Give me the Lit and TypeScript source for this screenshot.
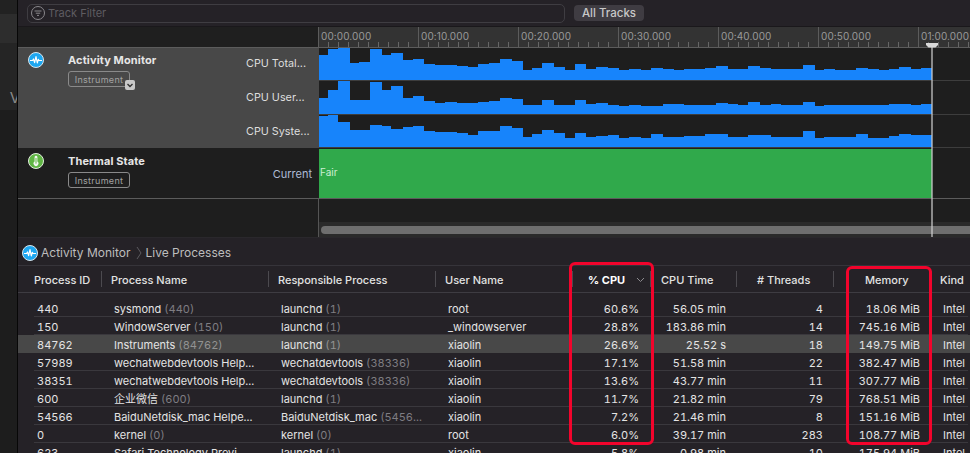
import { LitElement, html, css, svg } from "lit";
import { customElement } from "lit/decorators.js";

const EDGES = [319,328,338,350,359,370,382,391,403,413,424,435,445,457,468,478,489,500,512,523,532,542,554,565,575,586,596,608,619,629,641,651,663,674,684,694,705,716,728,738,748,760,771,781,792,803,815,824,835,845,856,868,879,889,899,911,921,932];
const ROW1 = [25,31,32,17,18,31,25,27,20,21,16,15,15,14,13,16,17,21,19,10,12,17,13,10,16,11,13,12,10,11,10,12,11,10,11,11,12,14,11,11,14,12,11,11,11,15,10,11,10,10,12,11,10,11,13,11,12];
const ROW2 = [16,24,33,14,14,32,24,28,16,18,13,11,12,11,11,12,13,16,15,9,9,14,9,9,14,10,11,9,8,9,8,8,10,10,9,9,9,11,10,9,12,9,10,9,9,12,8,9,9,9,9,9,9,10,10,9,10];
const ROW3 = [31,32,25,17,17,22,21,18,20,21,16,15,15,14,12,16,16,21,19,10,13,17,14,9,14,10,11,12,9,10,9,13,10,10,11,11,13,13,10,10,12,12,10,10,10,16,9,10,10,10,13,9,9,11,13,12,12];

const barPath = (hs: number[], h: number) => {
  let d = `M0 ${h}`;
  hs.forEach((v, i) => {
    d += `V${h - v}H${EDGES[i + 1] - 319}`;
  });
  return d + `V${h}Z`;
};

const RULER = ["00:00.000","00:10.000","00:20.000","00:30.000","00:40.000","00:50.000","01:00.000"];

type Row = [string, string, string, string, string, string, string, string, string, string, string];
const ROWS: Row[] = [
  ["440","sysmond","(440)","launchd","(1)","root","60.6%","56.05 min","4","18.06 MiB",""],
  ["150","WindowServer","(150)","launchd","(1)","_windowserver","28.8%","183.86 min","14","745.16 MiB",""],
  ["84762","Instruments","(84762)","launchd","(1)","xiaolin","26.6%","25.52 s","18","149.75 MiB","sel"],
  ["57989","wechatwebdevtools Help...","","wechatdevtools","(38336)","xiaolin","17.1%","51.58 min","22","382.47 MiB",""],
  ["38351","wechatwebdevtools Help...","","wechatdevtools","(38336)","xiaolin","13.6%","43.77 min","11","307.77 MiB",""],
  ["600","企业微信","(600)","launchd","(1)","xiaolin","11.7%","21.82 min","79","768.51 MiB",""],
  ["54566","BaiduNetdisk_mac Helpe...","","BaiduNetdisk_mac","(5456...","xiaolin","7.2%","21.46 min","8","151.16 MiB",""],
  ["0","kernel","(0)","kernel","(0)","root","6.0%","39.17 min","283","108.77 MiB",""],
  ["623","Safari Technology Previ...","","launchd","(1)","xiaolin","5.8%","0.98 min","10","175.94 MiB",""],
];

const pulse = (size: number) => html`<svg class="ico" width=${size} height=${size} viewBox="0 0 16 16">
  <circle cx="8" cy="8" r="7.5" fill="#1ea7f0" stroke="#d8e6ee" stroke-width="1"/>
  <path d="M2 8.5H4.6L5.5 7L6.6 10.6L8 4.6L9.3 11L10.3 7.4L11 8.5H14" fill="none" stroke="#fff" stroke-width="1.2" stroke-linejoin="round"/>
</svg>`;

const thermo = html`<svg class="ico" width="16" height="16" viewBox="0 0 16 16">
  <circle cx="8" cy="8" r="7.5" fill="#5fb544" stroke="#e3eede" stroke-width="1"/>
  <path d="M6.6 4.2a1.4 1.4 0 0 1 2.8 0V8.6a2.4 2.4 0 1 1-2.8 0Z" fill="#f2f7ef"/>
  <path d="M8 5V10.6" stroke="#5fb544" stroke-width="1"/>
</svg>`;

@customElement("app-root")
export class AppRoot extends LitElement {
  static styles = css`
    :host {
      display: block;
      width: 970px;
      height: 453px;
      overflow: hidden;
      font-family: Inter, "Noto Sans CJK SC", sans-serif;
      font-size: 11px;
      color: #e4e4e4;
      background: #252227;
    }
    .app { position: relative; display: flex; width: 970px; height: 453px; overflow: hidden; }

    .strip { width: 17px; flex: none; border-right: 1px solid #070707; display: flex; flex-direction: column; }
    .s1 { height: 14px; background: #222; }
    .s2 { height: 29px; background: #2d2d2d; }
    .s3 { height: 67px; background: #252525; overflow: hidden; display: flex; align-items: flex-end; justify-content: flex-end; }
    .s3 span { font-size: 15px; color: #8a8a8a; margin-right: -3px; margin-bottom: 4px; line-height: 16px; }
    .s4 { flex: 1; background: #1d1d1d; }

    .main { flex: 1; min-width: 0; display: flex; flex-direction: column; }

    .filterbar { height: 26px; flex: none; display: flex; align-items: center; gap: 9px; padding-left: 9px; border-bottom: 1px solid #1a181b; }
    .field { width: 538px; height: 19px; box-sizing: border-box; border: 1px solid #3f3d42; border-radius: 5px; display: flex; align-items: center; gap: 2px; padding-left: 2px; color: #5e5c61; font-size: 11px; }
    .allbtn { width: 70px; height: 16px; background: #3f3c42; border-radius: 4px; color: #c8c8c8; font-size: 11.5px; font-weight: 500; display: flex; align-items: center; justify-content: center; }

    .tlhead { height: 21px; flex: none; display: flex; box-sizing: border-box; border-bottom: 1px solid #5c5c5c; }
    .tlleft { width: 300px; flex: none; background: #1f1f1f; border-right: 1px solid #5c5c5c; }
    .ruler {
      flex: 1; display: flex; overflow: hidden; color: #9a9a9a; font-size: 10px; letter-spacing: .1px;
      background-color: #333;
      background-image:
        repeating-linear-gradient(to right, #5c5c5c 0 1px, transparent 1px 100px),
        repeating-linear-gradient(to right, #666 0 1px, transparent 1px 10px);
      background-size: 100% 100%, 100% 5px;
      background-position: -1px 0, -1px 100%;
      background-repeat: no-repeat;
    }
    .ruler span { width: 100px; flex: none; box-sizing: border-box; padding-left: 2px; line-height: 18px; }

    .track { display: flex; flex: none; background: #1e1e1e; }
    .tleft { width: 301px; flex: none; box-sizing: border-box; display: grid; grid-template-columns: 50px 178px 1fr; position: relative; }
    .sel { background: #484848; }
    .tr1 { height: 100px; }
    .tr2 { height: 51px; box-sizing: border-box; border-bottom: 1px solid #5c5c5c; }
    .tr2 .tleft { padding-top: 1px; }
    .tr3 { height: 38px; }
    .iconcell { padding: 4px 0 0 10px; }
    .ico { display: block; flex: none; }
    .title { font-weight: 700; font-size: 11px; letter-spacing: .12px; color: #e6e6e6; line-height: 16px; padding-top: 4px; }
    .badgewrap { position: relative; width: 62px; margin-top: 3px; }
    .badge { box-sizing: border-box; width: 62px; height: 16px; border: 1px solid #8a8a8a; border-radius: 3px; color: #a2a2a2; font-size: 9px; letter-spacing: .3px; display: flex; align-items: center; justify-content: center; }
    .corner { position: absolute; left: 57px; top: 9px; width: 10px; height: 10px; border-radius: 2px; background: #c9c9c9; }
    .corner svg { display: block; }
    .labels { margin-top: -1px; display: flex; flex-direction: column; }
    .labels div { height: 34px; line-height: 34px; color: #dedede; font-size: 10.8px; white-space: nowrap; }
    .current { display: flex; align-items: center; justify-content: flex-end; padding-right: 7px; color: #aebcd6; font-size: 11px; }

    .charts { flex: 1; display: flex; flex-direction: column; }
    .chart { display: block; border-bottom: 1px solid #3d3d3d; }
    .greenwrap { flex: 1; padding-top: 1px; }
    .green { width: 613px; height: 49px; background: #30a94b; color: #cdeed4; font-size: 10px; line-height: 47px; padding-left: 1px; box-sizing: border-box; }
    .blank { flex: 1; display: flex; flex-direction: column; justify-content: flex-end; border-left: 1px solid #555; margin-left: -1px; }
    .sbar { height: 15px; background: #2a2a2a; padding: 4px 0 3px 2px; box-sizing: border-box; }
    .thumb { height: 8px; background: #6e6e6e; border-radius: 4px 0 0 4px; }

    .crumb { height: 29px; flex: none; box-sizing: border-box; border-bottom: 1px solid #36343a; border-top: 1px solid #2a282c; padding-top: 2px; display: flex; align-items: center; padding-left: 4px; color: #bdbdbd; font-size: 12px; }
    .crumb .ico { margin-right: 3px; }
    .crumb .gt { margin: 0 3px 0 6px; }

    .cols { display: grid; grid-template-columns: 84px 167px 167px 137px 78px 86px 97px 98px 38px; }
    .thead { height: 27px; flex: none; box-sizing: border-box; border-bottom: 1px solid #3e3c42; align-items: center; color: #e2e2e2; }
    .th { position: relative; height: 16px; line-height: 18px; box-sizing: border-box; font-weight: 500; white-space: nowrap; }
    .th.div { border-right: 1px solid #4c4a4f; }
    .p1 { padding-left: 16px; } .p2 { padding-left: 9px; } .p5 { padding-left: 15px; font-weight: 700; color: #fff; }
    .p6 { padding-left: 10px; } .p7 { padding-left: 20px; } .p8 { padding-left: 31px; } .p9 { padding-left: 8px; }
    .sort { position: absolute; right: 5px; top: 6px; }

    .body { padding-top: 6px; font-variant-numeric: tabular-nums; }
    .row { padding-left: 16px; padding-right: 2px; }
    .row.on { background: #484848; }
    .inner { display: grid; grid-template-columns: 68px 167px 167px 137px 78px 86px 97px 98px 36px; height: 18px; box-sizing: border-box; border-bottom: 1px solid #3a383d; padding-top: 2px; line-height: 17px; white-space: nowrap; }
    .row.on .inner { border-bottom-color: transparent; }
    .c1 { padding-left: 3px; } .c2 { padding-left: 12px; } .c3 { padding-left: 12px; } .c4 { padding-left: 12px; }
    .r { text-align: right; }
    .c5 { padding-right: 12px; } .c6 { padding-right: 11px; } .c7 { padding-right: 11px; } .c8 { padding-right: 12px; }
    .c9 { padding-left: 11px; }
    .dim { color: #7f7d82; }
    .row.on .dim { color: #929292; }

    .playhead { position: absolute; left: 931px; top: 43px; width: 2px; height: 194px; background: rgba(205,205,205,.62); }
    .cap { position: absolute; left: -5px; top: 0; }
    .mark { position: absolute; box-sizing: border-box; border: 3px solid #f2042c; border-radius: 6px; }
    .m1 { left: 569px; top: 262px; width: 85px; height: 183px; }
    .m2 { left: 846px; top: 266px; width: 86px; height: 179px; }
  `;

  render() {
    return html`<div class="app">
      <div class="strip">
        <div class="s1"></div>
        <div class="s2"></div>
        <div class="s3"><span>V</span></div>
        <div class="s4"></div>
      </div>
      <div class="main">
        <div class="filterbar">
          <div class="field">
            <svg width="16" height="16" viewBox="0 0 16 16" fill="none" stroke="#8a888c">
              <circle cx="8" cy="8" r="6.5"/>
              <path d="M4.5 6H11.5M5.8 8.2H10.2M7 10.4H9"/>
            </svg>
            Track Filter
          </div>
          <div class="allbtn">All Tracks</div>
        </div>
        <div class="tlhead">
          <div class="tlleft"></div>
          <div class="ruler">${RULER.map((t) => html`<span>${t}</span>`)}</div>
        </div>

        <div class="track tr1">
          <div class="tleft sel">
            <div class="iconcell">${pulse(16)}</div>
            <div>
              <div class="title">Activity Monitor</div>
              <div class="badgewrap">
                <div class="badge">Instrument</div>
                <div class="corner">
                  <svg width="10" height="10" viewBox="0 0 10 10"><path d="M2.5 4L5 6.5L7.5 4" fill="none" stroke="#333" stroke-width="1.4"/></svg>
                </div>
              </div>
            </div>
            <div class="labels"><div>CPU Total...</div><div>CPU User...</div><div>CPU Syste...</div></div>
          </div>
          <div class="charts">
            <svg class="chart" width="651" height="32" viewBox="0 0 651 32">${svg`<path d=${barPath(ROW1, 32)} fill="#1784fb"/>`}</svg>
            <svg class="chart" width="651" height="33" viewBox="0 0 651 33">${svg`<path d=${barPath(ROW2, 33)} fill="#1784fb"/>`}</svg>
            <svg class="chart" width="651" height="32" viewBox="0 0 651 32">${svg`<path d=${barPath(ROW3, 32)} fill="#1784fb"/>`}</svg>
          </div>
        </div>

        <div class="track tr2">
          <div class="tleft">
            <div class="iconcell">${thermo}</div>
            <div>
              <div class="title">Thermal State</div>
              <div class="badgewrap"><div class="badge">Instrument</div></div>
            </div>
            <div class="current">Current</div>
          </div>
          <div class="greenwrap"><div class="green">Fair</div></div>
        </div>

        <div class="track tr3">
          <div class="tleft"></div>
          <div class="blank"><div class="sbar"><div class="thumb"></div></div></div>
        </div>

        <div class="crumb">
          ${pulse(16)}
          <span>Activity Monitor</span>
          <svg class="gt" width="6" height="14" viewBox="0 0 6 14"><path d="M1 1L5 7L1 13" fill="none" stroke="#5c5a5f"/></svg>
          <span>Live Processes</span>
        </div>

        <div class="cols thead">
          <div class="th div p1">Process ID</div>
          <div class="th div p2">Process Name</div>
          <div class="th div p2">Responsible Process</div>
          <div class="th div p2">User Name</div>
          <div class="th div p5">% CPU
            <svg class="sort" width="9" height="6" viewBox="0 0 9 6"><path d="M1 1L4.5 4.5L8 1" fill="none" stroke="#8c8a8e"/></svg>
          </div>
          <div class="th div p6">CPU Time</div>
          <div class="th div p7"># Threads</div>
          <div class="th div p8">Memory</div>
          <div class="th p9">Kind</div>
        </div>

        <div class="body">
          ${ROWS.map((r) => html`<div class="row ${r[10] ? "on" : ""}">
            <div class="inner">
              <div class="c1">${r[0]}</div>
              <div class="c2">${r[1]} ${r[2] ? html`<span class="dim">${r[2]}</span>` : ""}</div>
              <div class="c3">${r[3]} <span class="dim">${r[4]}</span></div>
              <div class="c4">${r[5]}</div>
              <div class="r c5">${r[6]}</div>
              <div class="r c6">${r[7]}</div>
              <div class="r c7">${r[8]}</div>
              <div class="r c8">${r[9]}</div>
              <div class="c9">Intel</div>
            </div>
          </div>`)}
        </div>
      </div>

      <div class="playhead">
        <svg class="cap" width="12" height="5" viewBox="0 0 12 5"><path d="M0 0H12V2L9.5 4.5H2.5L0 2Z" fill="#d9d9d9"/></svg>
      </div>
      <div class="mark m1"></div>
      <div class="mark m2"></div>
    </div>`;
  }
}
